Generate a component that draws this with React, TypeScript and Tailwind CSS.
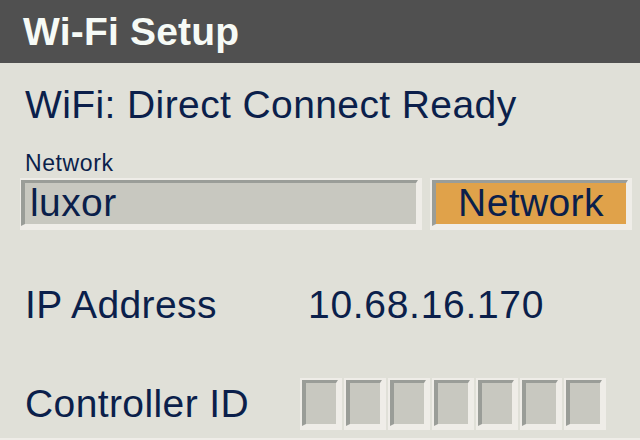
import React from "react";

const font = { fontFamily: '"Liberation Sans", Arial, sans-serif' };

function Bevel({ className, fillClass, children }: { className: string; fillClass: string; children?: React.ReactNode }) {
  // light outer frame, dark top/left bevel, light bottom/right edge
  return (
    <div className={`bg-[#efede8] ${className}`}>
      <div className={`h-full border-t-[3px] border-l-4 border-r-2 border-b-2 border-t-[#9a9d98] border-l-[#9a9d98] border-r-[#efede8] border-b-[#efede8] ${fillClass}`}>
        {children}
      </div>
    </div>
  );
}

export default function App() {
  const ids = [0, 1, 2, 3, 4, 5, 6];

  return (
    <div style={font} className="w-[640px] h-[440px] bg-[#e0e0d8] text-[#0b1f4b] flex flex-col overflow-hidden">
      <div className="h-[63px] shrink-0 bg-[#505050] pl-[23px] pt-[12px]">
        <h1 className="text-[39px] leading-none font-bold text-[#f6faf6] tracking-[0.2px]">Wi-Fi Setup</h1>
      </div>

      <div className="flex-1 flex flex-col pl-[25px] tracking-[0.4px]">
        <div className="mt-[22px] text-[39px] leading-none">WiFi: Direct Connect Ready</div>

        <div className="mt-[28px] text-[23px] leading-none tracking-[0.6px]">Network</div>

        <div className="mt-[3px] -ml-[5px] flex gap-[8px]">
          <Bevel className="w-[402px] h-[52px] pl-[1px] pt-[2px] pr-[4px] pb-[4px]" fillClass="bg-[#c8c8c0] pl-[5px]">
            <div className="text-[39px] leading-none">luxor</div>
          </Bevel>
          <Bevel className="w-[202px] h-[52px] pl-[2px] pt-[2px] pr-[4px] pb-[4px]" fillClass="bg-[#e0a24a] flex justify-center">
            <div className="text-[39px] leading-none">Network</div>
          </Bevel>
        </div>

        <div className="mt-[55px] flex text-[39px] leading-none">
          <span className="w-[283px]">IP Address</span>
          <span className="tracking-[0.7px]">10.68.16.170</span>
        </div>

        <div className="mt-[54px] flex">
          <span className="w-[275px] mt-[6px] text-[39px] leading-none">Controller ID</span>
          <div className="flex gap-[2px]">
            {ids.map((i) => (
              <Bevel key={i} className="w-[42px] h-[52px] pl-[2px] pt-[2px] pr-[4px] pb-[4px]" fillClass="bg-[#c8c8c0] border-t-4" />
            ))}
          </div>
        </div>
      </div>

      <div className="h-[2px] shrink-0 bg-[#efede8]" />
    </div>
  );
}
